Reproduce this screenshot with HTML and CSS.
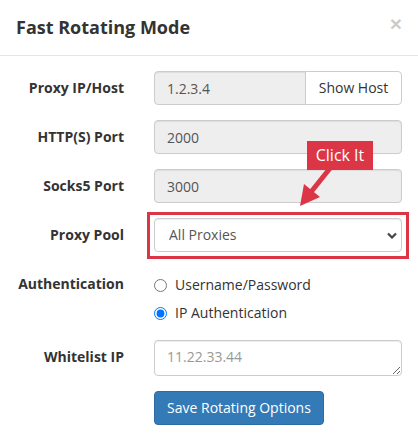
FILE: index.html
```html
<!DOCTYPE html>
<html>
<head>
<meta charset="utf-8">
<link rel="stylesheet" href="styles.css">
</head>
<body>
<div class="modal">
  <div class="modal-header">
    <h4 class="modal-title">Fast Rotating Mode</h4>
    <button class="close" type="button">×</button>
  </div>
  <div class="modal-body">
    <form class="form">
      <div class="form-group">
        <label class="control-label">Proxy IP/Host</label>
        <div class="input-group">
          <input class="form-control ro" type="text" value="1.2.3.4" readonly>
          <button class="btn btn-default" type="button">Show Host</button>
        </div>
      </div>
      <div class="form-group">
        <label class="control-label">HTTP(S) Port</label>
        <input class="form-control ro" type="text" value="2000" readonly>
      </div>
      <div class="form-group">
        <label class="control-label">Socks5 Port</label>
        <input class="form-control ro" type="text" value="3000" readonly>
      </div>
      <div class="form-group">
        <label class="control-label">Proxy Pool</label>
        <div class="select-wrap">
          <select class="form-control sel">
            <option>All Proxies</option>
          </select>
          <svg class="chevron" width="10" height="7" viewBox="0 0 10 7"><polyline points="1,1.5 5,5.5 9,1.5" fill="none" stroke="#444" stroke-width="2.2"/></svg>
          <div class="highlight"></div>
          <div class="callout">Click It</div>
          <svg class="arrow" width="50" height="50" viewBox="0 0 50 50">
            <line x1="41" y1="7" x2="21" y2="32" stroke="#dc3545" stroke-width="5"/>
            <polygon points="10,46 14,24 30,37" fill="#dc3545"/>
          </svg>
        </div>
      </div>
      <div class="form-group">
        <label class="control-label">Authentication</label>
        <div class="radios">
          <label class="radio"><input type="radio" name="auth"> Username/Password</label>
          <label class="radio"><input type="radio" name="auth" checked> IP Authentication</label>
        </div>
      </div>
      <div class="form-group">
        <label class="control-label">Whitelist IP</label>
        <textarea class="form-control ta" rows="1" placeholder="11.22.33.44"></textarea>
      </div>
      <div class="form-group">
        <span></span>
        <div><button class="btn btn-primary" type="button">Save Rotating Options</button></div>
      </div>
    </form>
  </div>
</div>
</body>
</html>
```

FILE: styles.css
```css
* { box-sizing: border-box; }
html, body { margin: 0; padding: 0; background: #fff; }
body {
  font-family: "Open Sans", "DejaVu Sans", sans-serif;
  font-size: 14px;
  line-height: 20px;
  color: #333;
}
.modal { width: 418px; }
.modal-header {
  display: flex;
  justify-content: space-between;
  align-items: flex-start;
  padding: 15px 16px 15px 16px;
  border-bottom: 1px solid #e5e5e5;
  height: 56px;
}
.modal-title {
  margin: 0;
  font-size: 18px;
  line-height: 25px;
  font-weight: 700;
  color: #333;
}
.close {
  border: 0;
  background: none;
  padding: 0;
  margin-top: -2px;
  font-family: "Liberation Sans", Arial, sans-serif;
  font-size: 21px;
  font-weight: 700;
  line-height: 1;
  color: #000;
  opacity: .2;
}
.modal-body { padding: 15px 16px 18px 0; }
.form-group {
  display: grid;
  grid-template-columns: 124px 248px;
  column-gap: 30px;
  margin-bottom: 15px;
}
.form-group:last-child { margin-bottom: 0; }
.control-label {
  text-align: right;
  font-weight: 700;
  padding-top: 7px;
  white-space: nowrap;
}
.form-control {
  display: block;
  width: 100%;
  height: 34px;
  padding: 6px 12px;
  font-family: inherit;
  font-size: 14px;
  line-height: 20px;
  color: #555;
  background: #fff;
  border: 1px solid #ccc;
  border-radius: 4px;
  box-shadow: inset 0 1px 1px rgba(0,0,0,.075);
  outline: none;
}
.ro { background: #eee; }
.input-group { display: flex; }
.input-group .form-control { border-radius: 4px 0 0 4px; flex: 1; min-width: 0; }
.btn {
  font-family: inherit;
  font-size: 14px;
  line-height: 20px;
  padding: 6px 12px;
  border: 1px solid transparent;
  border-radius: 4px;
  height: 34px;
  white-space: nowrap;
}
.btn-default {
  background: #fff;
  color: #333;
  border-color: #ccc;
  margin-left: -1px;
  border-radius: 0 4px 4px 0;
  width: 97px;
}
.btn-primary {
  background: #337ab7;
  border-color: #2e6da4;
  color: #fff;
  width: 170px;
}
.select-wrap { position: relative; }
.sel {
  appearance: none;
  -webkit-appearance: none;
  padding-left: 14px;
}
.chevron {
  position: absolute;
  right: 5px;
  top: 14px;
  pointer-events: none;
}
.highlight {
  position: absolute;
  left: -7px;
  top: -6px;
  right: -7px;
  bottom: -7px;
  border: 3px solid #dc3545;
  pointer-events: none;
}
.callout {
  position: absolute;
  left: 153px;
  top: -77px;
  width: 66px;
  height: 29px;
  background: #dc3545;
  color: #fff;
  font-size: 16px;
  line-height: 29px;
  text-align: center;
}
.arrow {
  position: absolute;
  left: 136px;
  top: -58px;
}
.radios {
  padding-top: 8px;
  padding-bottom: 2px;
  display: flex;
  flex-direction: column;
  gap: 8px;
}
.radio {
  display: flex;
  align-items: center;
  gap: 8px;
  color: #333;
  line-height: 20px;
}
.radio input {
  margin: 0;
  width: 13px;
  height: 13px;
}
.ta {
  height: 36px;
  resize: vertical;
}
.ta::placeholder { color: #999; }
```
